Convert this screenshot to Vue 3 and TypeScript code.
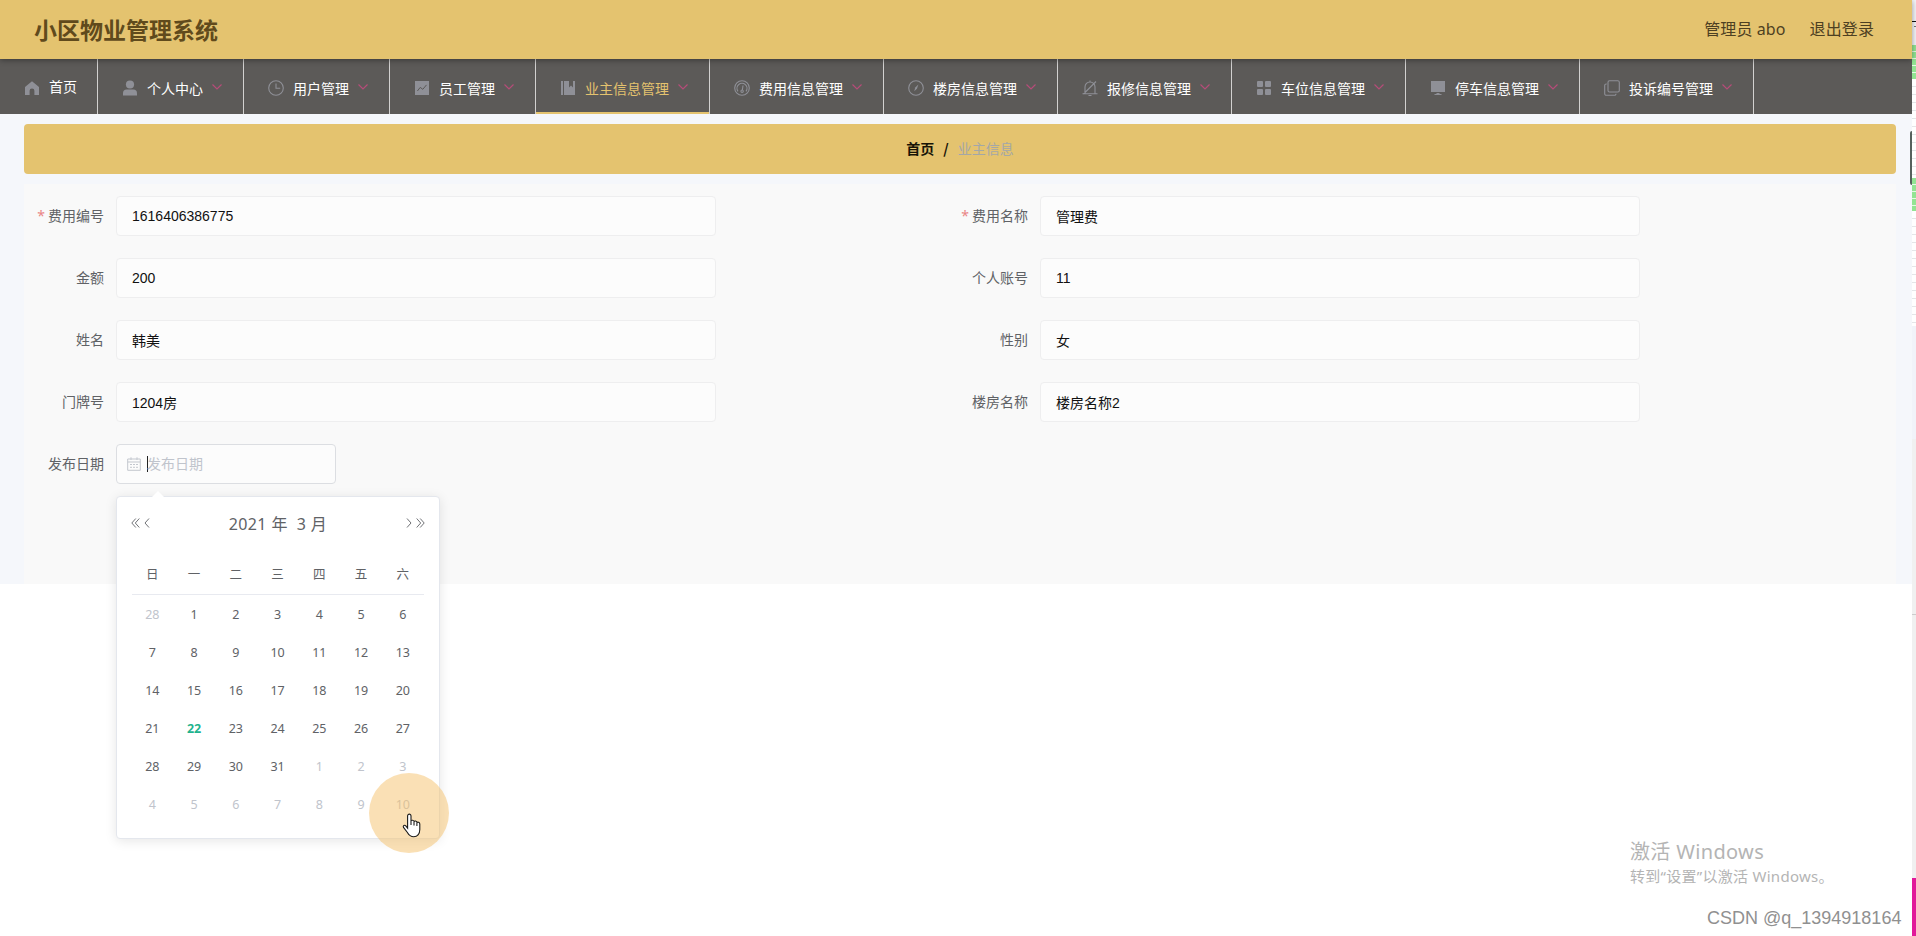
<script setup lang="ts">
interface MenuItem {
  icon: string
  label: string
  active?: boolean
}
interface Field {
  label: string
  value: string
  required?: boolean
}
interface Day {
  n: number
  kind: 'other' | 'current' | 'today'
}

const menu: MenuItem[] = [
  { icon: 'user', label: '个人中心' },
  { icon: 'clock', label: '用户管理' },
  { icon: 'chart', label: '员工管理' },
  { icon: 'book', label: '业主信息管理', active: true },
  { icon: 'gauge', label: '费用信息管理' },
  { icon: 'compass', label: '楼房信息管理' },
  { icon: 'bell', label: '报修信息管理' },
  { icon: 'grid', label: '车位信息管理' },
  { icon: 'monitor', label: '停车信息管理' },
  { icon: 'copy', label: '投诉编号管理' },
]

const fields: Field[] = [
  { label: '费用编号', value: '1616406386775', required: true },
  { label: '费用名称', value: '管理费', required: true },
  { label: '金额', value: '200' },
  { label: '个人账号', value: '11' },
  { label: '姓名', value: '韩美' },
  { label: '性别', value: '女' },
  { label: '门牌号', value: '1204房' },
  { label: '楼房名称', value: '楼房名称2' },
]

const hasHan = (text: string): boolean => /[\u4e00-\u9fff]/.test(text)

const weekdays = ['日', '一', '二', '三', '四', '五', '六']

const days: Day[] = Array.from({ length: 42 }, (_, i): Day => {
  if (i === 0) return { n: 28, kind: 'other' }
  if (i > 31) return { n: i - 31, kind: 'other' }
  return { n: i, kind: i === 22 ? 'today' : 'current' }
})
</script>

<template>
  <div class="screen">
    <div class="page">
      <header class="header">
        <h1 class="title">小区物业管理系统</h1>
        <div class="account">
          <span>管理员 abo</span>
          <span>退出登录</span>
        </div>
      </header>

      <nav class="nav">
        <div class="item home">
          <svg class="icon" viewBox="0 0 16 16"><path fill="currentColor" d="M8 1.2 1 7v8h4.6v-4.2a2.4 2.4 0 0 1 4.8 0V15H15V7z" /></svg>
          <span class="label">首页</span>
        </div>
        <div v-for="m in menu" :key="m.label" class="item" :class="{ active: m.active }">
          <svg class="icon" viewBox="0 0 16 16">
            <g v-if="m.icon === 'user'" fill="currentColor">
              <circle cx="8" cy="4.5" r="4.1" />
              <path d="M1 15.5v-2.3C1 11 2.4 9.6 4.5 9.6h7c2.1 0 3.5 1.4 3.5 3.6v2.3z" />
            </g>
            <g v-else-if="m.icon === 'clock'" class="line">
              <circle cx="8" cy="8" r="7.3" /><path d="M8 3.5V8.3h4.2" />
            </g>
            <g v-else-if="m.icon === 'chart'">
              <path fill="currentColor" d="M1 1h14v14H1z" /><path class="cut" d="m3.4 11 2.8-3.6 2.6 1.9 3.7-4.4" />
            </g>
            <path v-else-if="m.icon === 'book'" fill="currentColor" d="M1 1h2v14H1zM4 1h5v6.5l2-1.9 2 1.9V1h2v14H4z" />
            <g v-else-if="m.icon === 'gauge'" class="line">
              <circle cx="8" cy="8" r="7.3" /><path d="M4 11.3A5 5 0 1 1 12 11.3M9 5.500 8.400 10" /><circle cx="8.100" cy="11.200" r="1.200" />
            </g>
            <g v-else-if="m.icon === 'compass'" class="line">
              <circle cx="8" cy="8" r="7.3" /><path class="needle" d="M10.4 4.6 8.9 8.800 6.2 11.200 7.2 7.600z" />
            </g>
            <g v-else-if="m.icon === 'bell'" class="line">
              <path d="M.5 13.8h15M3 13.500V7a5 5 0 0 1 10 0v6.500M8 .500V2M6.500 15.500h3M1.500 14 14 1.500" />
            </g>
            <g v-else-if="m.icon === 'grid'" fill="currentColor">
              <rect x="1" y="1" width="6" height="6" rx="1" /><rect x="9" y="1" width="6" height="6" rx="1" />
              <rect x="1" y="9" width="6" height="6" rx="1" /><rect x="9" y="9" width="6" height="6" rx="1" />
            </g>
            <path v-else-if="m.icon === 'monitor'" fill="currentColor" d="M1 1h14v11H1zM6.500 13h3v1h2v1h-7v-1h2z" />
            <g v-else class="line">
              <rect x="4" y=".7" width="11.3" height="11.3" rx="1.500" /><path d="M2.700 4H2.200A1.500 1.500 0 0 0 .700 5.500v8.300a1.500 1.500 0 0 0 1.500 1.500h8.300a1.500 1.500 0 0 0 1.500-1.500" />
            </g>
          </svg>
          <span class="label">{{ m.label }}</span>
          <svg class="arrow" viewBox="0 0 12 12"><path d="m1.500 3.500 4.500 4.500 4.500-4.500" /></svg>
        </div>
      </nav>

      <main class="content">
        <div class="crumbs">
          <span>首页</span><span class="slash">/</span><span class="here">业主信息</span>
        </div>

        <section class="panel">
          <div class="form">
            <div v-for="f in fields" :key="f.label" class="field">
              <label class="name"><i v-if="f.required">*</i>{{ f.label }}</label>
              <div class="input" :class="{ han: hasHan(f.value) }">{{ f.value }}</div>
            </div>
            <div class="field">
              <label class="name">发布日期</label>
              <div class="input date">
                <svg class="calicon" viewBox="0 0 14 14"><path d="M.700 2h12.600v11.300H.700zM.700 5h12.600M4 .300V3M10 .300V3M3 7.500h2m1 0h2m1 0h2M3 10.300h2m1 0h2m1 0h2" /></svg>
                <span class="caret"></span>
                <span class="placeholder">发布日期</span>

                <div class="picker">
                  <div class="picker-head">
                    <div class="steps">
                      <svg class="double" viewBox="0 0 9 10"><path d="M4.800.500.800 5l4 4.500M8.300.500l-4 4.500 4 4.500" /></svg>
                      <svg class="single" viewBox="0 0 6 10"><path d="M5 .500 1 5l4 4.500" /></svg>
                    </div>
                    <div class="month">2021 年&nbsp; 3 月</div>
                    <div class="steps">
                      <svg class="single" viewBox="0 0 6 10"><path d="m1 .500 4 4.500-4 4.500" /></svg>
                      <svg class="double" viewBox="0 0 9 10"><path d="m.700.500 4 4.500-4 4.500M4.200.500l4 4.500-4 4.500" /></svg>
                    </div>
                  </div>
                  <div class="week">
                    <span v-for="w in weekdays" :key="w">{{ w }}</span>
                  </div>
                  <div class="days">
                    <span v-for="(d, i) in days" :key="i" :class="d.kind">{{ d.n }}</span>
                  </div>
                  <div class="halo">
                    <svg class="hand" viewBox="0 0 20 25"><path d="M5.600 15.200V3c0-2.500 3.400-2.500 3.400 0v5.200c.200-1.500 3-1.300 3 .600.300-1.300 2.900-1 2.900.900.500-1 2.900-.700 2.900 1.400v5.500c0 4.500-2.600 7.100-6 7.100-3.300 0-5-1.600-6.400-4.200L1.500 14.400c-.900-1.600 1-2.900 2.300-1.500zM9 8v4M12 9v3.400M14.900 10v3" /></svg>
                  </div>
                </div>
              </div>
            </div>
          </div>
        </section>
      </main>

      <div class="scroll-thumb"></div>
      <div class="activate">
        <div class="big">激活 Windows</div>
        <div class="small">转到“设置”以激活 Windows。</div>
      </div>
      <div class="credit">CSDN @q_1394918164</div>
    </div>

    <aside class="edge">
      <div class="e-top"></div>
      <div class="e-green first"></div>
      <div class="e-rows short"></div>
      <div class="e-green second"></div>
      <div class="e-rows tall"></div>
      <div class="e-blue"></div>
      <div class="e-gray"></div>
      <div class="e-pink"></div>
    </aside>
  </div>
</template>

<style>
body {
  margin: 0;
  overflow: hidden;
  background: #fff;
}
</style>

<style scoped>
.screen {
  display: flex;
  width: 1916px;
  height: 936px;
  overflow: hidden;
  font-family: 'Noto Sans', 'Noto Sans CJK SC', sans-serif;
  font-size: 14px;
}
.page {
  position: relative;
  width: 1912px;
  height: 936px;
  background: #fff;
}
.header {
  position: relative;
  z-index: 1;
  display: flex;
  align-items: center;
  justify-content: space-between;
  box-sizing: border-box;
  height: 59px;
  padding: 0 38px 2px 34px;
  background: #e4c36f;
  box-shadow: 0 1px 6px rgba(0, 0, 0, 0.4);
}
.title {
  margin: 0;
  font: 700 23px/30px 'Noto Sans CJK SC', sans-serif;
  color: #604a1c;
}
.account {
  display: flex;
  gap: 24px;
  font-size: 16px;
  line-height: 24px;
  letter-spacing: 0.1px;
  color: #4d4022;
}
.nav {
  display: flex;
  height: 55px;
  background: #5c5a58;
}
.item {
  display: flex;
  align-items: center;
  box-sizing: border-box;
  padding: 0 20px;
  border-right: 1px solid #d2d1d0;
  color: #fff;
  white-space: nowrap;
}
.item.home {
  width: 98px;
}
.item.active {
  color: #e4c36f;
  box-shadow: inset 0 -2px #e4c36f;
}
.icon {
  flex: none;
  width: 16px;
  height: 16px;
  margin: 3px 9px 0 4px;
  color: #8f9097;
}
.label {
  margin-top: 3px;
  line-height: 20px;
  font-family: 'Noto Sans CJK SC', sans-serif;
}
.home .label {
  margin-top: -1px;
}
.line {
  fill: none;
  stroke: currentColor;
  stroke-width: 1.1;
}
.needle {
  fill: currentColor;
  stroke: none;
}
.cut {
  fill: none;
  stroke: #5c5a58;
  stroke-width: 1;
}
.arrow {
  width: 12px;
  height: 12px;
  margin-left: 8px;
  fill: none;
  stroke: #b64c79;
  stroke-width: 1.2;
}
.content {
  box-sizing: border-box;
  height: 470px;
  padding: 10px 16px 0 24px;
  background: #f5f7fb;
}
.crumbs {
  display: flex;
  align-items: center;
  justify-content: center;
  box-sizing: border-box;
  height: 50px;
  padding-bottom: 2px;
  border-radius: 4px;
  background: #e4c36f;
  font-family: 'Noto Sans CJK SC', sans-serif;
  font-weight: 700;
  color: #171407;
}
.slash {
  margin: 0 9px;
}
.here {
  font-weight: 400;
  color: #a3a7a8;
}
.panel {
  box-sizing: border-box;
  height: 400px;
  margin-top: 10px;
  padding-top: 12px;
  background: #f9f9f9;
}
.form {
  display: grid;
  grid-template-columns: 924px 924px;
  row-gap: 22px;
}
.field {
  display: flex;
  height: 40px;
}
.name {
  width: 80px;
  margin-right: 12px;
  line-height: 40px;
  text-align: right;
  white-space: nowrap;
  color: #606266;
}
.name i {
  margin-right: 3px;
  font-style: normal;
  color: #e98585;
}
.input {
  box-sizing: border-box;
  width: 600px;
  height: 40px;
  padding: 0 15px;
  border: 1px solid #eeeeef;
  border-radius: 4px;
  background: #fcfcfc;
  font: 14px/38px 'Liberation Sans', 'Noto Sans CJK SC', sans-serif;
  color: #111;
}
.input.han {
  padding-top: 1px;
}
.date {
  position: relative;
  display: flex;
  align-items: center;
  width: 220px;
  padding: 0 10px;
  border-color: #dcdee2;
}
.calicon {
  width: 14px;
  height: 14px;
  fill: none;
  stroke: #c3c7ce;
}
.caret {
  width: 1px;
  height: 16px;
  margin-left: 6px;
  background: #222;
}
.placeholder {
  margin-left: -1px;
  color: #c0c4cc;
}
.picker {
  position: absolute;
  z-index: 2;
  top: 51px;
  left: -1px;
  box-sizing: border-box;
  width: 324px;
  height: 343px;
  padding: 0 15px;
  border: 1px solid #e4e7ed;
  border-radius: 4px;
  background: #fff;
  box-shadow: 0 2px 12px rgba(0, 0, 0, 0.1);
  font-family: 'Noto Sans', 'Noto Sans CJK SC', sans-serif;
  font-size: 12.5px;
  color: #606266;
}
.picker::before {
  content: '';
  position: absolute;
  top: -6px;
  left: 35px;
  border: 6px solid transparent;
  border-top: 0;
  border-bottom-color: #fff;
}
.picker-head {
  display: flex;
  justify-content: space-between;
  padding: 12px 0 0;
}
.steps {
  display: flex;
  gap: 4px;
  margin: 9px -1px 0;
}
.steps svg {
  height: 10px;
  fill: none;
  stroke: #606266;
  stroke-width: 0.9;
}
.double {
  width: 9px;
}
.single {
  width: 6px;
}
.month {
  font-size: 16px;
  line-height: 30px;
  letter-spacing: 0.35px;
}
.week,
.days {
  display: grid;
  grid-template-columns: repeat(7, 41.75px);
  text-align: center;
}
.week {
  height: 39px;
  margin-top: 16px;
  border-bottom: 1px solid #e8eaf0;
  line-height: 40px;
}
.week span,
.days span {
  position: relative;
  left: -0.5px;
}
.days {
  grid-auto-rows: 38px;
  margin-top: 1px;
  line-height: 38px;
}
.other {
  color: #c0c4cc;
}
.today {
  font-weight: 700;
  color: #1fb38e;
}
.halo {
  position: absolute;
  top: 276px;
  left: 252px;
  width: 80px;
  height: 80px;
  border-radius: 50%;
  background: rgba(244, 192, 104, 0.49);
}
.hand {
  position: absolute;
  top: 40px;
  left: 33px;
  width: 20px;
  height: 25px;
  fill: #fff;
  stroke: #1b1b1b;
  stroke-width: 1.1;
}
.scroll-thumb {
  position: absolute;
  top: 131px;
  right: 0;
  width: 2px;
  height: 54px;
  border-radius: 2px 0 0 2px;
  background: #56615d;
}
.activate {
  position: absolute;
  top: 838px;
  left: 1630px;
  white-space: nowrap;
  color: #b4b4b4;
}
.big {
  font-size: 20px;
  line-height: 28px;
  letter-spacing: 0.35px;
}
.small {
  font-size: 15px;
  line-height: 20px;
  letter-spacing: 0.28px;
}
.credit {
  position: absolute;
  top: 906px;
  left: 1707px;
  font: 18px/24px 'Liberation Sans', sans-serif;
  white-space: nowrap;
  color: #909090;
}
.edge {
  display: flex;
  flex-direction: column;
  width: 4px;
}
.e-top {
  height: 45px;
  background: linear-gradient(#111, #111) 0 21px / 4px 1px no-repeat, linear-gradient(#777, #777) 2px 26px / 2px 1px no-repeat, #f4f5f9;
}
.e-green {
  background: repeating-linear-gradient(#93e493 0 6px, #e6f9e6 6px 7px);
}
.first {
  height: 34px;
}
.second {
  height: 33px;
}
.e-rows {
  background: repeating-linear-gradient(#fff 0 7px, #e4e6e8 7px 8px);
}
.short {
  height: 99px;
}
.tall {
  height: 115px;
}
.e-blue {
  height: 113px;
  background: #f1f3f9;
}
.e-gray {
  height: 439px;
  background: linear-gradient(#ccc, #ccc) 0 175px / 4px 1px no-repeat, #f0f0f0;
}
.e-pink {
  flex: 1;
  background: #e1199a;
}
</style>
